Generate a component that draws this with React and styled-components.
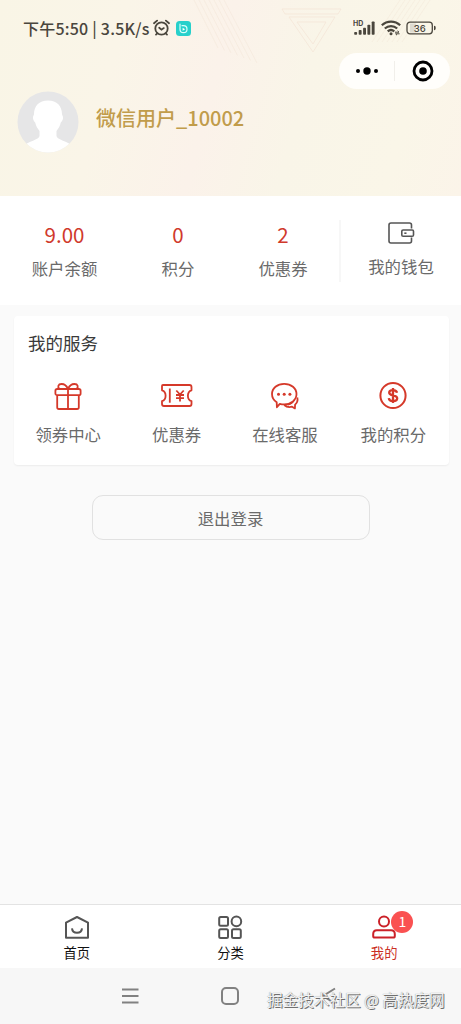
import styled, { createGlobalStyle } from "styled-components";

const GlobalStyle = createGlobalStyle`
  * {
    box-sizing: border-box;
  }

  body {
    margin: 0;
    background: #fafafa;
    font-family: "Noto Sans CJK SC", "Noto Sans", sans-serif;
  }
`;

const StyledPage = styled.div`
  width: 461px;
  height: 1024px;
  display: flex;
  flex-direction: column;
  overflow: hidden;
  background-color: #fafafa;
`;

const StyledHeader = styled.header`
  position: relative;
  height: 196px;
  flex-shrink: 0;
  background: linear-gradient(
    105deg,
    #f9f5e6 0%,
    #faf5e8 25%,
    #fbf2ea 46%,
    #f9f5e8 64%,
    #faf6e8 85%,
    #fbf4e9 100%
  );
`;

const Pattern = styled.svg`
  position: absolute;
  top: 0;
  left: 190px;
`;

const StatusBar = styled.div`
  position: relative;
  height: 53px;
  padding: 3px 25px 0 23px;
  display: flex;
  align-items: center;
  justify-content: space-between;
`;

const StatusGroup = styled.div`
  display: flex;
  align-items: center;
  gap: ${(props) => props.$gap}px;
`;

const StatusText = styled.span`
  color: #4a463d;
  font-size: 16px;
  font-weight: 500;
  letter-spacing: 0.22px;
  line-height: 20px;
  white-space: pre;
  width: 127px;
`;

const Capsule = styled.div`
  position: relative;
  width: 111px;
  height: 36px;
  margin-left: 339px;
  border-radius: 18px;
  background-color: #fffefb;
  display: flex;
  align-items: center;
`;

const CapsuleHalf = styled.div`
  flex: 1;
  height: 20px;
  display: flex;
  align-items: center;
  justify-content: center;

  & + & {
    border-left: 1px solid #f1efea;
  }
`;

const Profile = styled.div`
  position: relative;
  display: flex;
  align-items: flex-start;
  gap: 17px;
  padding: 2px 17px;
`;

const UserName = styled.h1`
  margin: 14px 0 0;
  color: #c19c4b;
  font-size: 20px;
  font-weight: 500;
  line-height: 26px;
`;

const Account = styled.section`
  height: 109px;
  flex-shrink: 0;
  display: flex;
  padding: 24px 0 0 9px;
  background-color: #fff;
`;

const Stat = styled.div`
  width: ${(props) => props.$width}px;
  display: flex;
  flex-direction: column;
  align-items: center;
  gap: 8px;
`;

const StatValue = styled.span`
  color: #d0392b;
  font-size: 20.5px;
  line-height: 28px;
`;

const Label = styled.span`
  color: #6a6a6a;
  font-size: 16.4px;
  line-height: 24px;
  white-space: nowrap;
`;

const Wallet = styled.div`
  width: 122px;
  height: 62px;
  margin-left: 9px;
  padding-top: 1px;
  border-left: 2px solid #f7f7f7;
  display: flex;
  flex-direction: column;
  align-items: center;
  gap: 9px;
`;

const Services = styled.section`
  height: 149px;
  flex-shrink: 0;
  margin: 11px 12px 0 14px;
  padding: 14px 0 0;
  border-radius: 4px;
  background-color: #fff;
  box-shadow: 0 1px 2px rgba(0, 0, 0, 0.06);
`;

const ServicesTitle = styled.h2`
  margin: 0 0 0 14px;
  color: #3a3a3a;
  font-size: 17.5px;
  font-weight: 400;
  line-height: 26px;
`;

const ServiceList = styled.div`
  display: grid;
  grid-template-columns: repeat(4, 108.4px);
  margin-top: 25px;
`;

const Service = styled.div`
  display: flex;
  flex-direction: column;
  align-items: center;
  gap: 11px;
`;

const LogoutButton = styled.button`
  width: 278px;
  height: 45px;
  flex-shrink: 0;
  margin: 30px 0 0 92px;
  padding: 0 1px 0 0;
  border: 1px solid #e1e1e1;
  border-radius: 11px;
  background-color: #fafafa;
  color: #6a6a6a;
  font-family: inherit;
  font-size: 16.4px;
`;

const TabBar = styled.nav`
  height: 64px;
  flex-shrink: 0;
  margin-top: auto;
  border-top: 1px solid #e3e3e3;
  background-color: #fff;
  display: grid;
  grid-template-columns: repeat(3, 1fr);
`;

const Tab = styled.div`
  position: relative;
  padding-top: 9px;
  display: flex;
  flex-direction: column;
  align-items: center;
  gap: 4px;
  color: ${(props) => (props.$active ? "#cb2f23" : "#111")};
  font-size: 13.3px;
  line-height: 18px;
`;

const Badge = styled.span`
  position: absolute;
  top: 6px;
  left: 84px;
  width: 22px;
  height: 22px;
  border-radius: 50%;
  background-color: #fa5151;
  color: #fff;
  font-size: 14px;
  line-height: 21px;
  text-align: center;
`;

const SystemBar = styled.footer`
  position: relative;
  height: 56px;
  flex-shrink: 0;
  padding: 0 122px 0 120px;
  display: flex;
  align-items: center;
  justify-content: space-between;
  background-color: #f7f7f7;
`;

const Watermark = styled.span`
  position: absolute;
  left: 267px;
  top: 19px;
  color: #f2f2f2;
  font-size: 15.6px;
  line-height: 24px;
  white-space: nowrap;
  text-shadow:
    1px 1px 0 #707070,
    0 0 1px #888;
`;

function HeaderPattern() {
  return (
    <Pattern width="271" height="90" fill="none" stroke="#f3e4d6" strokeWidth="0.7">
      {[0, 5, 10, 15, 20, 25, 30].map((x) => (
        <path key={x} d={`M${4 + x} 0 L${28 + x * 1.3} ${48 + x / 2}`} opacity="0.7" />
      ))}
      {[0, 5, 10, 15, 20, 25, 30].map((x) => (
        <path key={x} d={`M${240 - x} 0 L${212 - x} 42`} opacity="0.55" />
      ))}
      <path d="M92 9h59l-3 5H95zM99 17h46l-22 35zM107 22h29l-13 22z" />
    </Pattern>
  );
}

function AlarmIcon() {
  return (
    <svg width="18" height="18" viewBox="0 0 18 18" fill="none" stroke="#4a463d" strokeWidth="1.8" strokeLinecap="round">
      <circle cx="8.5" cy="9.5" r="6.2" />
      <path d="M6.2 8.8 8.5 10.700l2.300-1.600M1 4.200 4.100 1.600M16 4.200l-3.100-2.600M4.300 14.300 3 15.600M12.700 14.300l1.300 1.300" />
    </svg>
  );
}

function AppIcon() {
  return (
    <svg width="15" height="15" viewBox="0 0 15 15" fill="none">
      <rect width="15" height="15" rx="3.5" fill="#27d0cb" />
      <path d="M4 3v5.2a3.5 3.5 0 1 0 3.5-3.5H6" stroke="#d9fffb" strokeWidth="1.2" strokeLinecap="round" />
      <path d="M6.6 6.7v3l2.5-1.5z" fill="#fff" />
    </svg>
  );
}

function SignalIcon() {
  return (
    <svg width="23" height="16" viewBox="0 0 23 16" fill="#4a463d">
      <text x="0" y="5.500" fontFamily="Inter, sans-serif" fontSize="7" fontWeight="700">HD</text>
      <rect x="1.2" y="12" width="2.900" height="2.800" rx="0.8" />
      <rect x="5.700" y="10" width="2.900" height="4.800" rx="0.8" />
      <rect x="10.100" y="7.700" width="2.900" height="7.100" rx="0.8" />
      <rect x="14.400" y="4.700" width="2.900" height="10.100" rx="0.8" />
      <rect x="18.700" y="1.500" width="2.900" height="13.300" rx="0.8" />
    </svg>
  );
}

function WifiIcon() {
  return (
    <svg width="20" height="16" viewBox="0 0 20 16" fill="none" stroke="#4a463d" strokeWidth="2.200">
      <path d="M.8 5.3C6 .4 14 .4 19.2 5.3M3.8 8.5c3.6-3.2 8.8-3.2 12.4 0M6.7 11.4c2-1.7 4.6-1.7 6.6 0" />
      <circle cx="10" cy="13.7" r="1.5" fill="#4a463d" stroke="none" />
      <path d="M14 12.2h4l-1.4-1.4M18.6 13.8h-4l1.4 1.4" strokeWidth="1" />
    </svg>
  );
}

function BatteryIcon() {
  return (
    <svg width="30" height="14" viewBox="0 0 30 14">
      <rect x="4" y="2.5" width="6" height="9" fill="#dedbd1" />
      <rect x="1" y="1.2" width="25.3" height="11.6" rx="3" fill="none" stroke="#4a463d" strokeWidth="1.3" />
      <path d="M28 4.8c1.4 0 1.7.8 1.7 2.2s-.3 2.2-1.7 2.2z" fill="#4a463d" />
      <text x="13.8" y="10.5" textAnchor="middle" fill="#4a463d" fontFamily="Inter, sans-serif" fontSize="9.500" fontWeight="500">36</text>
    </svg>
  );
}

function Avatar() {
  return (
    <svg width="62" height="62" viewBox="0 0 62 62">
      <defs>
        <clipPath id="avatar-clip">
          <circle cx="31" cy="31" r="30.5" />
        </clipPath>
      </defs>
      <g clipPath="url(#avatar-clip)">
        <rect width="62" height="62" fill="#e6e6e7" />
        <path
          d="M31 9.5c9 0 14 5.8 14 13.5 0 1.5 1.3 2 1 4.200-.3 2.200-1.200 3-2.200 4.300-.8 3.500-2.300 6-4.300 8.500v5c0 4 12 5 15.500 10L50 62H12l-5-7c3.500-5 15.500-6 15.500-10v-5c-2-2.500-3.500-5-4.300-8.500-1-1.300-1.900-2.100-2.200-4.300-.3-2.200 1-2.700 1-4.200C17 15.300 22 9.500 31 9.500z"
          fill="#fff"
        />
      </g>
    </svg>
  );
}

function WalletIcon() {
  return (
    <svg width="28" height="24" viewBox="0 0 28 24" fill="none" stroke="#555" strokeWidth="1.6">
      <path d="M24.500 7.500V4a2 2 0 0 0-2-2H4a2 2 0 0 0-2 2v16a2 2 0 0 0 2 2h18.500a2 2 0 0 0 2-2v-3.500" />
      <rect x="14.800" y="9" width="11.700" height="6.300" rx="1.300" />
      <path d="M17.300 12.200h2.200" />
    </svg>
  );
}

function GiftIcon() {
  return (
    <svg width="30" height="30" viewBox="0 0 30 30" fill="none" stroke="#d5392a" strokeWidth="1.8" strokeLinejoin="round">
      <rect x="2.400" y="8" width="25.200" height="6.200" rx="1.800" />
      <path d="M4.200 14.200v12q0 1.800 1.800 1.800h18q1.800 0 1.800-1.800v-12M15 8v20M15 8C13.500 4.500 11.200 3 8.600 3 5 3 4.300 6 6.500 8M15 8c1.500-3.500 3.800-5 6.400-5C25 3 25.700 6 23.500 8" />
    </svg>
  );
}

function CouponIcon() {
  return (
    <svg width="34" height="30" viewBox="0 0 34 30" fill="none" stroke="#d5392a" strokeWidth="1.8" strokeLinejoin="round">
      <path d="M3 4h26.500q2 0 2 2v3.300c-4.800 1.400-4.800 9.400 0 10.800V23q0 2-2 2H4q-2 0-2-2v-2.900c4.800-1.400 4.800-9.400 0-10.800V5q0-1 1-1z" />
      <path d="M9.800 7.500v14.200" />
      <path d="M16.300 9.500 20 13.500l3.700-4M20 13.500v7M16 14h8M16 17.200h8" />
    </svg>
  );
}

function ChatIcon() {
  return (
    <svg width="30" height="30" viewBox="0 0 30 30" fill="none" stroke="#d5392a" strokeWidth="1.8" strokeLinejoin="round">
      <path d="M14.200 2.800c7 0 12.300 4.400 12.300 10.300s-5.300 10.300-12.300 10.300c-1.600 0-3.100-.2-4.400-.6l-2.900 3.400-.2-4.900C3.700 19.400 2 16.600 2 13.100 2 7.200 7.200 2.800 14.200 2.800z" />
      <path d="M27.300 16.500c.7 3-.2 5.400-2.200 7.100l-.2 3.800-2.800-1.700c-3 .8-5.700.3-7.900-1.700" />
      <path d="M24.500 18.500c-1.300 3-3.500 4.700-6.500 5.300" strokeWidth="1.200" />
      <g fill="#d5392a" stroke="none">
        <circle cx="8.500" cy="13.300" r="1.500" />
        <circle cx="14.200" cy="13.300" r="1.500" />
        <circle cx="19.900" cy="13.300" r="1.500" />
      </g>
    </svg>
  );
}

function PointsIcon() {
  return (
    <svg width="30" height="30" viewBox="0 0 30 30" fill="none" stroke="#d5392a" strokeWidth="2">
      <circle cx="15" cy="14.500" r="12.600" />
      <path d="M19 11.800c-.3-1.800-1.700-2.700-4-2.700s-3.800.9-3.800 2.600c0 3.700 8 1.800 8 5.600 0 1.800-1.700 2.800-4.200 2.800s-4-1-4.200-3M15 7v15" strokeWidth="2.300" />
    </svg>
  );
}

const tabIcon = {
  width: 28,
  height: 26,
  viewBox: "0 0 28 26",
  fill: "none",
  strokeWidth: 2,
};

function HomeIcon() {
  return (
    <svg {...tabIcon} stroke="#555">
      <path d="M3 8.6 14 3l11 5.600v15.200H3z" strokeLinejoin="round" />
      <path d="M9 14.300c.6 6 9.400 6 10 0" />
    </svg>
  );
}

function CategoryIcon() {
  return (
    <svg {...tabIcon} stroke="#555">
      <rect x="3.200" y="3" width="8.800" height="8.800" rx="1.500" />
      <circle cx="20.400" cy="7.400" r="4.800" />
      <rect x="3.200" y="15.300" width="8.800" height="8.800" rx="1.500" />
      <rect x="16" y="15.300" width="8.800" height="8.800" rx="1.500" />
    </svg>
  );
}

function MineIcon() {
  return (
    <svg {...tabIcon} stroke="#cb2128">
      <circle cx="14" cy="7.600" r="5" />
      <path d="M3.200 22V20q0-3.700 3.700-3.700h14.200q3.700 0 3.700 3.700v2q0 1.600-1.600 1.600H4.800q-1.600 0-1.600-1.600z" />
    </svg>
  );
}

const stats = [
  { value: "9.00", label: "账户余额", width: 111 },
  { value: "0", label: "积分", width: 116 },
  { value: "2", label: "优惠券", width: 94 },
];

const services = [
  { label: "领券中心", Icon: GiftIcon },
  { label: "优惠券", Icon: CouponIcon },
  { label: "在线客服", Icon: ChatIcon },
  { label: "我的积分", Icon: PointsIcon },
];

const tabs = [
  { label: "首页", Icon: HomeIcon },
  { label: "分类", Icon: CategoryIcon },
  { label: "我的", Icon: MineIcon, active: true, badge: 1 },
];

function Header() {
  return (
    <StyledHeader>
      <HeaderPattern />
      <StatusBar>
        <StatusGroup $gap={3}>
          <StatusText>下午5:50 | 3.5K/s</StatusText>
          <StatusGroup $gap={5}>
            <AlarmIcon />
            <AppIcon />
          </StatusGroup>
        </StatusGroup>
        <StatusGroup $gap={5}>
          <SignalIcon />
          <WifiIcon />
          <BatteryIcon />
        </StatusGroup>
      </StatusBar>
      <Capsule>
        <CapsuleHalf>
          <svg width="24" height="10" viewBox="0 0 24 10">
            <circle cx="3" cy="5" r="2" />
            <circle cx="12" cy="5" r="3.700" />
            <circle cx="21" cy="5" r="2" />
          </svg>
        </CapsuleHalf>
        <CapsuleHalf>
          <svg width="22" height="22" viewBox="0 0 22 22">
            <circle cx="11" cy="11" r="9" fill="none" stroke="#000" strokeWidth="2.800" />
            <circle cx="11" cy="11" r="3.800" />
          </svg>
        </CapsuleHalf>
      </Capsule>
      <Profile>
        <Avatar />
        <UserName>微信用户_10002</UserName>
      </Profile>
    </StyledHeader>
  );
}

function App() {
  return (
    <StyledPage>
      <GlobalStyle />
      <Header />

      <Account>
        {stats.map((stat) => (
          <Stat key={stat.label} $width={stat.width}>
            <StatValue>{stat.value}</StatValue>
            <Label>{stat.label}</Label>
          </Stat>
        ))}
        <Wallet>
          <WalletIcon />
          <Label>我的钱包</Label>
        </Wallet>
      </Account>

      <Services>
        <ServicesTitle>我的服务</ServicesTitle>
        <ServiceList>
          {services.map(({ label, Icon }) => (
            <Service key={label}>
              <Icon />
              <Label>{label}</Label>
            </Service>
          ))}
        </ServiceList>
      </Services>

      <LogoutButton>退出登录</LogoutButton>

      <TabBar>
        {tabs.map(({ label, Icon, active, badge }) => (
          <Tab key={label} $active={active}>
            <Icon />
            {label}
            {badge && <Badge>{badge}</Badge>}
          </Tab>
        ))}
      </TabBar>

      <SystemBar>
        <svg width="20" height="20" viewBox="0 0 20 20" stroke="#818181" strokeWidth="2">
          <path d="M2 3.500h16.500M2 10h16.500M2 16.500h16.500" />
        </svg>
        <svg width="20" height="20" viewBox="0 0 20 20" fill="none" stroke="#818181" strokeWidth="2">
          <rect x="2" y="2" width="16" height="16" rx="4" />
        </svg>
        <svg width="20" height="20" viewBox="0 0 20 20" fill="none" stroke="#818181" strokeWidth="2">
          <path d="M16 2.500 4 10l12 7.500" />
        </svg>
        <Watermark>掘金技术社区 @ 高热度网</Watermark>
      </SystemBar>
    </StyledPage>
  );
}

export default App;
